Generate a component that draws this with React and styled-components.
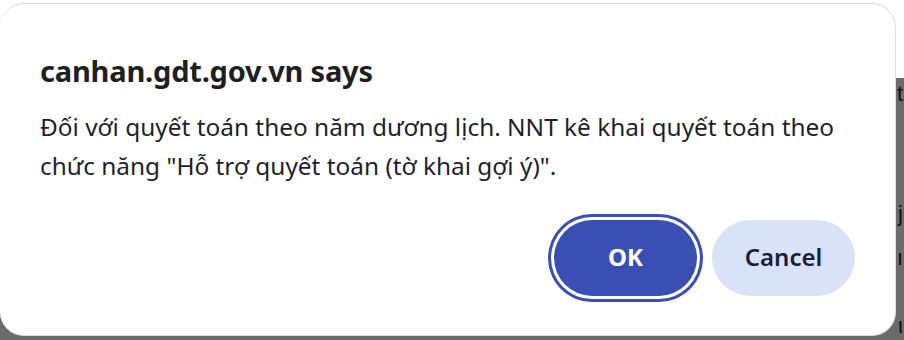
import React from "react";
import styled, { createGlobalStyle } from "styled-components";

const GlobalStyle = createGlobalStyle`
  html, body {
    margin: 0;
    padding: 0;
    background: #ffffff;
  }
  body {
    font-family: "Noto Sans", "Open Sans", sans-serif;
  }
`;

const Page = styled.div`
  position: relative;
  width: 904px;
  height: 340px;
  overflow: hidden;
  display: flex;
  flex-direction: column;
`;

const TopStrip = styled.div`
  height: 78px;
  flex-shrink: 0;
  background: #ffffff;
`;

const Backdrop = styled.div`
  flex: 1;
  background: #6b6b6b;
  display: flex;
  flex-direction: column;
  align-items: flex-end;
  padding-right: 1px;
  overflow: hidden;
`;

const BackGlyph = styled.span`
  font-family: "Liberation Sans", Arial, sans-serif;
  font-size: 22px;
  line-height: 24px;
  color: #111;
  margin-top: ${(p) => p.$gap}px;
`;

const Dialog = styled.div`
  position: absolute;
  left: 0;
  top: 3px;
  width: 896px;
  height: 333px;
  box-sizing: border-box;
  background: #ffffff;
  border: 1px solid #dedede;
  border-left: none;
  border-radius: 24px;
  padding: 48px 40px 0 40px;
  display: flex;
  flex-direction: column;
`;

const Title = styled.h1`
  margin: 0;
  font-size: 29px;
  font-weight: 700;
  line-height: 38px;
  color: #1f1f1f;
  letter-spacing: -0.2px;
`;

const Message = styled.p`
  margin: 17px 0 0 0;
  font-size: 24.4px;
  line-height: 39px;
  color: #1f1f2b;
  max-width: 816px;
`;

const Actions = styled.div`
  margin-top: auto;
  margin-bottom: 39px;
  display: flex;
  justify-content: flex-end;
  gap: 15px;
`;

const Button = styled.button`
  width: 143px;
  height: 76px;
  border-radius: 38px;
  border: none;
  padding: 0 0 4px 0;
  font-family: "Noto Sans", "Open Sans", sans-serif;
  font-size: 24px;
  font-weight: ${(p) => (p.$primary ? 700 : 600)};
  cursor: pointer;
  background: ${(p) => (p.$primary ? "#3a4fb4" : "#d8e3f8")};
  color: ${(p) => (p.$primary ? "#ffffff" : "#1b1e3c")};
  box-shadow: ${(p) =>
    p.$primary ? "0 0 0 3px #ffffff, 0 0 0 6px #3a4fb4" : "none"};
`;

export default function App() {
  return (
    <>
      <GlobalStyle />
      <Page>
        <TopStrip />
        <Backdrop>
          <BackGlyph $gap={4}>t</BackGlyph>
          <BackGlyph $gap={96}>j</BackGlyph>
          <BackGlyph $gap={20}>ı</BackGlyph>
          <BackGlyph $gap={44}>ι</BackGlyph>
        </Backdrop>
        <Dialog role="dialog">
          <Title>canhan.gdt.gov.vn says</Title>
          <Message>
            Đối với quyết toán theo năm dương lịch. NNT kê khai quyết toán theo
            chức năng "Hỗ trợ quyết toán (tờ khai gợi ý)".
          </Message>
          <Actions>
            <Button $primary>OK</Button>
            <Button>Cancel</Button>
          </Actions>
        </Dialog>
      </Page>
    </>
  );
}
